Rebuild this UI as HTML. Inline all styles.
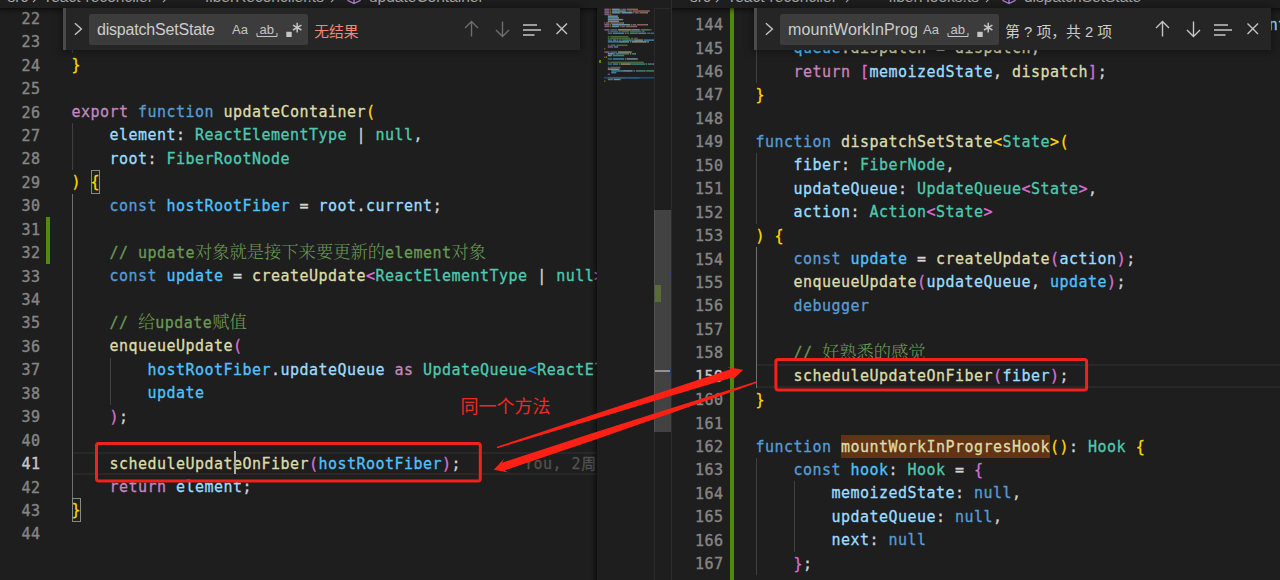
<!DOCTYPE html>
<html lang="zh-CN"><head><meta charset="utf-8"><title>VS Code</title>
<style>
html,body{margin:0;padding:0;background:#1e1e1e;}
body{width:1280px;height:580px;overflow:hidden;position:relative;font-family:"Liberation Sans","Noto Sans CJK SC",sans-serif;color:#d4d4d4;}
.pane{position:absolute;top:0;height:580px;overflow:hidden;background:#1e1e1e;}
#lp{left:0;width:597px;}
#rp{left:672px;width:608px;}
.ln{position:absolute;left:0;height:23.44px;line-height:23.44px;white-space:pre;font-family:"DejaVu Sans Mono","Liberation Mono","Noto Sans CJK SC",monospace;font-size:15px;letter-spacing:0.47px;-webkit-text-stroke:0.3px;}
.num{position:absolute;left:1px;top:1.5px;text-align:right;color:#858585;-webkit-text-stroke:0.4px;}
.na{color:#c6c6c6;}
.code{position:absolute;top:1px;}
.k1{color:#c586c0}.k2{color:#569cd6}.t{color:#4ec9b0}.v{color:#9cdcfe}.c{color:#4fc1ff}.f{color:#dcdcaa}.p{color:#d4d4d4}
.b1{color:#ffd700}.b2{color:#da70d6}.b3{color:#179fff}.cm{color:#6a9955}
.zh{line-height:0;font-weight:300;-webkit-text-stroke:0;font-family:"Noto Serif CJK SC","Noto Sans CJK SC",serif;font-size:17.28px;letter-spacing:0;}
.zhs{line-height:0;font-family:"Noto Sans CJK SC",sans-serif;letter-spacing:0;}
.bm{outline:1px solid #888;outline-offset:-1px;background:rgba(0,100,0,0.1);}
.fmb{position:absolute;height:23.44px;background:#623315;}
.blame{color:#525252;margin-left:63px;}
.g{position:absolute;width:1.2px;background:#404040;}
.ga{background:#707070;}
.curline{position:absolute;height:23.44px;box-sizing:border-box;border-top:2px solid #282828;border-bottom:2px solid #282828;}
.cursor{position:absolute;width:2px;background:#aeafad;}
.dd{position:absolute;background:#4f8a0a;}
.topsh{position:absolute;left:0;top:8px;width:100%;height:6px;box-shadow:#000 0 6px 6px -6px inset;}
#mm{position:absolute;left:597px;top:8px;width:57px;height:572px;background:#1e1e1e;overflow:hidden;}
.mmsh{position:absolute;left:591px;top:8px;width:6px;height:572px;box-shadow:#000 -6px 0 6px -6px inset;}
.mmg{position:absolute;left:2px;top:51.8px;width:2px;height:3.4px;background:#568a0e;}
#sb{position:absolute;left:654px;top:8px;width:17px;height:572px;background:#1e1e1e;border-left:1px solid #2a2a2a;border-top:1.5px solid #2a2a2a;box-sizing:border-box;}
.sl{position:absolute;left:-1px;top:201.3px;width:17px;height:221.7px;background:rgba(121,121,121,0.4);border-left:1px solid rgba(255,255,255,0.05);box-sizing:border-box;}
.sbg{position:absolute;left:0;top:276px;width:5.5px;height:16.7px;background:#587c0c;opacity:0.75;}
.sbc{position:absolute;left:0;top:361.4px;width:16px;height:1.8px;background:#a0a0a0;}
.sbb{position:absolute;left:15px;width:2px;height:5px;background:#2a3f7a;}
#dv{position:absolute;left:671px;top:0;width:2px;height:580px;background:#2c2c2c;}
.bc{position:absolute;top:0;height:8px;overflow:hidden;background:#1e1e1e;font-size:15.5px;color:#a9a9a9;white-space:pre;}
.bc span{position:absolute;top:-12.2px;line-height:18px;}
.bc .ch{font-size:17px;top:-13px;}
.bc .cube{position:absolute;top:-11.3px;}
.fw{position:absolute;top:8px;width:517px;height:41.5px;background:#252526;box-shadow:0 0 8px 2px rgba(0,0,0,0.36);overflow:hidden;}
.sash{position:absolute;left:0;top:0;width:3px;height:100%;background:#4b4b4b;}
.ic{position:absolute;}
.dim{opacity:0.45;}
.inp{position:absolute;left:26px;top:5.6px;width:219px;height:31px;background:#3c3c3c;border-radius:2.5px;}
.q{position:absolute;left:8px;top:0;line-height:31px;font-size:16px;color:#cccccc;overflow:hidden;white-space:pre;height:31px;letter-spacing:-0.2px;}
.opt{position:absolute;font-size:13px;line-height:16px;color:#c5c5c5;}
.msg{position:absolute;left:251.2px;top:1.9px;line-height:45px;font-size:14.8px;color:#cccccc;white-space:pre;}
#anno{position:absolute;left:0;top:0;}
.mms{position:absolute;left:0;top:0;}
.chv{position:absolute;top:0;overflow:visible;}
.bmb{position:absolute;width:9.7px;height:23.44px;box-sizing:border-box;border:1px solid #888;background:rgba(0,100,0,0.1);}

</style></head>
<body>
<div id="lp" class="pane">
<div class="curline" style="left:72px;top:451.61px;width:600px"></div>
<i class="dd" style="left:46px;top:216.8px;height:47.3px;width:4px"></i>
<i class="bmb" style="left:90.8px;top:170.33px"></i><i class="bmb" style="left:71.8px;top:498.49px"></i>
<i class="g" style="left:72.00px;top:6.25px;height:46.88px"></i><i class="g" style="left:72.00px;top:123.45px;height:46.88px"></i><i class="g ga" style="left:72.00px;top:193.77px;height:304.72px"></i><i class="g" style="left:110.00px;top:357.85px;height:46.88px"></i><div class="ln" style="top:6.25px"><span class="num" style="width:39.5px">22</span><span class="code" style="left:71.5px">    <span class="cm">// return fiberRootNode</span></span></div>
<div class="ln" style="top:29.69px"><span class="num" style="width:39.5px">23</span><span class="code" style="left:71.5px"><span class="p">    </span><span class="k1">return</span><span class="p"> </span><span class="c">root</span><span class="p">;</span></span></div>
<div class="ln" style="top:53.13px"><span class="num" style="width:39.5px">24</span><span class="code" style="left:71.5px"><span class="b1">}</span></span></div>
<div class="ln" style="top:76.57px"><span class="num" style="width:39.5px">25</span><span class="code" style="left:71.5px"></span></div>
<div class="ln" style="top:100.01px"><span class="num" style="width:39.5px">26</span><span class="code" style="left:71.5px"><span class="k1">export</span><span class="p"> </span><span class="k2">function</span><span class="p"> </span><span class="f">updateContainer</span><span class="b1">(</span></span></div>
<div class="ln" style="top:123.45px"><span class="num" style="width:39.5px">27</span><span class="code" style="left:71.5px"><span class="p">    </span><span class="v">element</span><span class="p">: </span><span class="t">ReactElementType</span><span class="p"> | </span><span class="t">null</span><span class="p">,</span></span></div>
<div class="ln" style="top:146.89px"><span class="num" style="width:39.5px">28</span><span class="code" style="left:71.5px"><span class="p">    </span><span class="v">root</span><span class="p">: </span><span class="t">FiberRootNode</span></span></div>
<div class="ln" style="top:170.33px"><span class="num" style="width:39.5px">29</span><span class="code" style="left:71.5px"><span class="b1">)</span><span class="p"> </span><span class="b1">{</span></span></div>
<div class="ln" style="top:193.77px"><span class="num" style="width:39.5px">30</span><span class="code" style="left:71.5px"><span class="p">    </span><span class="k2">const</span><span class="p"> </span><span class="c">hostRootFiber</span><span class="p"> = </span><span class="v">root</span><span class="p">.</span><span class="v">current</span><span class="p">;</span></span></div>
<div class="ln" style="top:217.21px"><span class="num" style="width:39.5px">31</span><span class="code" style="left:71.5px"></span></div>
<div class="ln" style="top:240.65px"><span class="num" style="width:39.5px">32</span><span class="code" style="left:71.5px">    <span class="cm">// update<span class="zh">对象就是接下来要更新的</span>element<span class="zh">对象</span></span></span></div>
<div class="ln" style="top:264.09px"><span class="num" style="width:39.5px">33</span><span class="code" style="left:71.5px"><span class="p">    </span><span class="k2">const</span><span class="p"> </span><span class="c">update</span><span class="p"> = </span><span class="f">createUpdate</span><span class="b2">&lt;</span><span class="t">ReactElementType</span><span class="p"> | </span><span class="t">null</span><span class="b2">&gt;</span><span class="b2">(</span><span class="v">element</span><span class="b2">)</span><span class="p">;</span></span></div>
<div class="ln" style="top:287.53px"><span class="num" style="width:39.5px">34</span><span class="code" style="left:71.5px"></span></div>
<div class="ln" style="top:310.97px"><span class="num" style="width:39.5px">35</span><span class="code" style="left:71.5px">    <span class="cm">// <span class="zh">给</span>update<span class="zh">赋值</span></span></span></div>
<div class="ln" style="top:334.41px"><span class="num" style="width:39.5px">36</span><span class="code" style="left:71.5px"><span class="p">    </span><span class="f">enqueueUpdate</span><span class="b2">(</span></span></div>
<div class="ln" style="top:357.85px"><span class="num" style="width:39.5px">37</span><span class="code" style="left:71.5px"><span class="p">        </span><span class="c">hostRootFiber</span><span class="p">.</span><span class="v">updateQueue</span><span class="p"> </span><span class="k1">as</span><span class="p"> </span><span class="t">UpdateQueue</span><span class="b3">&lt;</span><span class="t">ReactElementType</span><span class="p"> | </span><span class="t">null</span><span class="b3">&gt;</span><span class="p">,</span></span></div>
<div class="ln" style="top:381.29px"><span class="num" style="width:39.5px">38</span><span class="code" style="left:71.5px"><span class="p">        </span><span class="c">update</span></span></div>
<div class="ln" style="top:404.73px"><span class="num" style="width:39.5px">39</span><span class="code" style="left:71.5px"><span class="p">    </span><span class="b2">)</span><span class="p">;</span></span></div>
<div class="ln" style="top:428.17px"><span class="num" style="width:39.5px">40</span><span class="code" style="left:71.5px"></span></div>
<div class="ln" style="top:451.61px"><span class="num na" style="width:39.5px">41</span><span class="code" style="left:71.5px"><span class="p">    </span><span class="f">scheduleUpdateOnFiber</span><span class="b2">(</span><span class="c">hostRootFiber</span><span class="b2">)</span><span class="p">;</span><span class="blame">You, 2<span class="zhs">周前</span> • feat: update</span></span></div>
<div class="ln" style="top:475.05px"><span class="num" style="width:39.5px">42</span><span class="code" style="left:71.5px"><span class="p">    </span><span class="k1">return</span><span class="p"> </span><span class="v">element</span><span class="p">;</span></span></div>
<div class="ln" style="top:498.49px"><span class="num" style="width:39.5px">43</span><span class="code" style="left:71.5px"><span class="b1">}</span></span></div>
<div class="ln" style="top:521.93px"><span class="num" style="width:39.5px">44</span><span class="code" style="left:71.5px"></span></div>
<i class="cursor" style="left:233.8px;top:451.3px;height:23.2px"></i>
<i class="topsh"></i>
</div>
<div id="mm"><svg class="mms" width="57" height="90" viewBox="0 0 57 90"><g opacity="0.6"><rect x="7.40" y="0.60" width="5.12" height="1.5" fill="#c586c0"/><rect x="13.38" y="0.60" width="0.85" height="1.5" fill="#ffd700"/><rect x="15.09" y="0.60" width="7.69" height="1.5" fill="#9cdcfe"/><rect x="23.63" y="0.60" width="0.85" height="1.5" fill="#ffd700"/><rect x="25.33" y="0.60" width="3.42" height="1.5" fill="#c586c0"/><rect x="29.60" y="0.60" width="10.25" height="1.5" fill="#ce9178"/><rect x="39.85" y="0.60" width="0.85" height="1.5" fill="#d4d4d4"/><rect x="7.40" y="2.31" width="5.12" height="1.5" fill="#c586c0"/><rect x="13.38" y="2.31" width="0.85" height="1.5" fill="#ffd700"/><rect x="15.09" y="2.31" width="13.66" height="1.5" fill="#9cdcfe"/><rect x="29.60" y="2.31" width="0.85" height="1.5" fill="#ffd700"/><rect x="31.31" y="2.31" width="3.42" height="1.5" fill="#c586c0"/><rect x="35.58" y="2.31" width="16.23" height="1.5" fill="#ce9178"/><rect x="51.81" y="2.31" width="0.85" height="1.5" fill="#d4d4d4"/><rect x="7.40" y="4.02" width="5.12" height="1.5" fill="#c586c0"/><rect x="13.38" y="4.02" width="0.85" height="1.5" fill="#ffd700"/><rect x="15.09" y="4.02" width="7.69" height="1.5" fill="#9cdcfe"/><rect x="22.77" y="4.02" width="0.85" height="1.5" fill="#d4d4d4"/><rect x="24.48" y="4.02" width="11.10" height="1.5" fill="#9cdcfe"/><rect x="36.44" y="4.02" width="0.85" height="1.5" fill="#ffd700"/><rect x="38.14" y="4.02" width="3.42" height="1.5" fill="#c586c0"/><rect x="42.41" y="4.02" width="7.69" height="1.5" fill="#ce9178"/><rect x="50.10" y="4.02" width="0.85" height="1.5" fill="#d4d4d4"/><rect x="7.40" y="5.73" width="5.12" height="1.5" fill="#c586c0"/><rect x="13.38" y="5.73" width="0.85" height="1.5" fill="#ffd700"/><rect x="10.82" y="7.44" width="9.39" height="1.5" fill="#9cdcfe"/><rect x="20.21" y="7.44" width="0.85" height="1.5" fill="#d4d4d4"/><rect x="10.82" y="9.15" width="10.25" height="1.5" fill="#9cdcfe"/><rect x="21.06" y="9.15" width="0.85" height="1.5" fill="#d4d4d4"/><rect x="10.82" y="10.86" width="14.52" height="1.5" fill="#9cdcfe"/><rect x="25.33" y="10.86" width="0.85" height="1.5" fill="#d4d4d4"/><rect x="10.82" y="12.57" width="11.10" height="1.5" fill="#9cdcfe"/><rect x="7.40" y="14.28" width="0.85" height="1.5" fill="#ffd700"/><rect x="9.11" y="14.28" width="3.42" height="1.5" fill="#c586c0"/><rect x="13.38" y="14.28" width="12.81" height="1.5" fill="#ce9178"/><rect x="26.19" y="14.28" width="0.85" height="1.5" fill="#d4d4d4"/><rect x="7.40" y="15.99" width="5.12" height="1.5" fill="#c586c0"/><rect x="13.38" y="15.99" width="0.85" height="1.5" fill="#ffd700"/><rect x="15.09" y="15.99" width="17.93" height="1.5" fill="#9cdcfe"/><rect x="33.87" y="15.99" width="0.85" height="1.5" fill="#ffd700"/><rect x="35.58" y="15.99" width="3.42" height="1.5" fill="#c586c0"/><rect x="39.85" y="15.99" width="10.25" height="1.5" fill="#ce9178"/><rect x="50.10" y="15.99" width="0.85" height="1.5" fill="#d4d4d4"/><rect x="7.40" y="17.70" width="5.12" height="1.5" fill="#c586c0"/><rect x="13.38" y="17.70" width="0.85" height="1.5" fill="#ffd700"/><rect x="15.09" y="17.70" width="6.83" height="1.5" fill="#9cdcfe"/><rect x="22.77" y="17.70" width="0.85" height="1.5" fill="#ffd700"/><rect x="24.48" y="17.70" width="3.42" height="1.5" fill="#c586c0"/><rect x="28.75" y="17.70" width="10.25" height="1.5" fill="#ce9178"/><rect x="39.00" y="17.70" width="0.85" height="1.5" fill="#d4d4d4"/><rect x="7.40" y="21.12" width="5.12" height="1.5" fill="#c586c0"/><rect x="13.38" y="21.12" width="6.83" height="1.5" fill="#569cd6"/><rect x="21.06" y="21.12" width="12.81" height="1.5" fill="#dcdcaa"/><rect x="33.87" y="21.12" width="0.85" height="1.5" fill="#ffd700"/><rect x="34.73" y="21.12" width="7.69" height="1.5" fill="#9cdcfe"/><rect x="42.41" y="21.12" width="0.85" height="1.5" fill="#d4d4d4"/><rect x="44.12" y="21.12" width="7.69" height="1.5" fill="#4ec9b0"/><rect x="51.81" y="21.12" width="0.85" height="1.5" fill="#ffd700"/><rect x="53.52" y="21.12" width="0.85" height="1.5" fill="#ffd700"/><rect x="10.82" y="22.83" width="1.71" height="1.5" fill="#6a9955"/><rect x="13.38" y="22.83" width="7.69" height="1.5" fill="#6a9955"/><rect x="21.92" y="22.83" width="1.71" height="1.5" fill="#6a9955"/><rect x="24.48" y="22.83" width="7.69" height="1.5" fill="#6a9955"/><rect x="33.02" y="22.83" width="11.10" height="1.5" fill="#6a9955"/><rect x="44.98" y="22.83" width="2.56" height="1.5" fill="#6a9955"/><rect x="10.82" y="24.54" width="4.27" height="1.5" fill="#569cd6"/><rect x="15.94" y="24.54" width="11.10" height="1.5" fill="#4fc1ff"/><rect x="27.90" y="24.54" width="0.85" height="1.5" fill="#d4d4d4"/><rect x="29.60" y="24.54" width="2.56" height="1.5" fill="#569cd6"/><rect x="33.02" y="24.54" width="7.69" height="1.5" fill="#4ec9b0"/><rect x="40.71" y="24.54" width="0.85" height="1.5" fill="#da70d6"/><rect x="41.56" y="24.54" width="6.83" height="1.5" fill="#4fc1ff"/><rect x="48.39" y="24.54" width="0.85" height="1.5" fill="#d4d4d4"/><rect x="50.10" y="24.54" width="1.71" height="1.5" fill="#179fff"/><rect x="51.81" y="24.54" width="0.85" height="1.5" fill="#d4d4d4"/><rect x="53.52" y="24.54" width="3.42" height="1.5" fill="#569cd6"/><rect x="56.93" y="24.54" width="0.07" height="1.5" fill="#da70d6"/><rect x="10.82" y="27.96" width="1.71" height="1.5" fill="#6a9955"/><rect x="13.38" y="27.96" width="17.93" height="1.5" fill="#6a9955"/><rect x="10.82" y="29.67" width="1.71" height="1.5" fill="#6a9955"/><rect x="13.38" y="29.67" width="19.64" height="1.5" fill="#6a9955"/><rect x="33.87" y="29.67" width="2.56" height="1.5" fill="#6a9955"/><rect x="37.29" y="29.67" width="3.42" height="1.5" fill="#6a9955"/><rect x="10.82" y="31.38" width="4.27" height="1.5" fill="#569cd6"/><rect x="15.94" y="31.38" width="3.42" height="1.5" fill="#4fc1ff"/><rect x="20.21" y="31.38" width="0.85" height="1.5" fill="#d4d4d4"/><rect x="21.92" y="31.38" width="2.56" height="1.5" fill="#569cd6"/><rect x="25.33" y="31.38" width="11.10" height="1.5" fill="#4ec9b0"/><rect x="36.44" y="31.38" width="0.85" height="1.5" fill="#da70d6"/><rect x="37.29" y="31.38" width="7.69" height="1.5" fill="#9cdcfe"/><rect x="44.98" y="31.38" width="0.85" height="1.5" fill="#d4d4d4"/><rect x="46.68" y="31.38" width="10.32" height="1.5" fill="#4fc1ff"/><rect x="10.82" y="33.09" width="11.10" height="1.5" fill="#4fc1ff"/><rect x="21.92" y="33.09" width="0.85" height="1.5" fill="#d4d4d4"/><rect x="22.77" y="33.09" width="9.39" height="1.5" fill="#9cdcfe"/><rect x="33.02" y="33.09" width="0.85" height="1.5" fill="#d4d4d4"/><rect x="34.73" y="33.09" width="14.52" height="1.5" fill="#dcdcaa"/><rect x="49.25" y="33.09" width="1.71" height="1.5" fill="#da70d6"/><rect x="50.95" y="33.09" width="0.85" height="1.5" fill="#d4d4d4"/><rect x="10.82" y="36.51" width="1.71" height="1.5" fill="#6a9955"/><rect x="13.38" y="36.51" width="5.12" height="1.5" fill="#6a9955"/><rect x="19.36" y="36.51" width="11.10" height="1.5" fill="#6a9955"/><rect x="10.82" y="38.22" width="5.12" height="1.5" fill="#c586c0"/><rect x="16.79" y="38.22" width="3.42" height="1.5" fill="#4fc1ff"/><rect x="20.21" y="38.22" width="0.85" height="1.5" fill="#d4d4d4"/><rect x="7.40" y="39.93" width="0.85" height="1.5" fill="#ffd700"/><rect x="7.40" y="43.35" width="5.12" height="1.5" fill="#c586c0"/><rect x="13.38" y="43.35" width="6.83" height="1.5" fill="#569cd6"/><rect x="21.06" y="43.35" width="12.81" height="1.5" fill="#dcdcaa"/><rect x="33.87" y="43.35" width="0.85" height="1.5" fill="#ffd700"/><rect x="10.82" y="45.06" width="5.98" height="1.5" fill="#9cdcfe"/><rect x="16.79" y="45.06" width="0.85" height="1.5" fill="#d4d4d4"/><rect x="18.50" y="45.06" width="13.66" height="1.5" fill="#4ec9b0"/><rect x="33.02" y="45.06" width="0.85" height="1.5" fill="#d4d4d4"/><rect x="34.73" y="45.06" width="3.42" height="1.5" fill="#4ec9b0"/><rect x="38.14" y="45.06" width="0.85" height="1.5" fill="#d4d4d4"/><rect x="10.82" y="46.77" width="3.42" height="1.5" fill="#9cdcfe"/><rect x="14.23" y="46.77" width="0.85" height="1.5" fill="#d4d4d4"/><rect x="15.94" y="46.77" width="11.10" height="1.5" fill="#4ec9b0"/><rect x="7.40" y="48.48" width="0.85" height="1.5" fill="#ffd700"/><rect x="9.11" y="48.48" width="0.85" height="1.5" fill="#ffd700"/><rect x="10.82" y="50.19" width="4.27" height="1.5" fill="#569cd6"/><rect x="15.94" y="50.19" width="11.10" height="1.5" fill="#4fc1ff"/><rect x="27.90" y="50.19" width="0.85" height="1.5" fill="#d4d4d4"/><rect x="29.60" y="50.19" width="3.42" height="1.5" fill="#9cdcfe"/><rect x="33.02" y="50.19" width="0.85" height="1.5" fill="#d4d4d4"/><rect x="33.87" y="50.19" width="5.98" height="1.5" fill="#9cdcfe"/><rect x="39.85" y="50.19" width="0.85" height="1.5" fill="#d4d4d4"/><rect x="10.82" y="53.61" width="1.71" height="1.5" fill="#6a9955"/><rect x="13.38" y="53.61" width="33.31" height="1.5" fill="#6a9955"/><rect x="10.82" y="55.32" width="4.27" height="1.5" fill="#569cd6"/><rect x="15.94" y="55.32" width="5.12" height="1.5" fill="#4fc1ff"/><rect x="21.92" y="55.32" width="0.85" height="1.5" fill="#d4d4d4"/><rect x="23.63" y="55.32" width="10.25" height="1.5" fill="#dcdcaa"/><rect x="33.87" y="55.32" width="0.85" height="1.5" fill="#da70d6"/><rect x="34.73" y="55.32" width="13.66" height="1.5" fill="#4ec9b0"/><rect x="49.25" y="55.32" width="0.85" height="1.5" fill="#d4d4d4"/><rect x="50.95" y="55.32" width="3.42" height="1.5" fill="#4ec9b0"/><rect x="54.37" y="55.32" width="0.85" height="1.5" fill="#da70d6"/><rect x="55.22" y="55.32" width="0.85" height="1.5" fill="#da70d6"/><rect x="56.08" y="55.32" width="0.92" height="1.5" fill="#9cdcfe"/><rect x="10.82" y="58.74" width="1.71" height="1.5" fill="#6a9955"/><rect x="13.38" y="58.74" width="10.25" height="1.5" fill="#6a9955"/><rect x="10.82" y="60.45" width="11.10" height="1.5" fill="#dcdcaa"/><rect x="21.92" y="60.45" width="0.85" height="1.5" fill="#da70d6"/><rect x="14.23" y="62.16" width="11.10" height="1.5" fill="#4fc1ff"/><rect x="25.33" y="62.16" width="0.85" height="1.5" fill="#d4d4d4"/><rect x="26.19" y="62.16" width="9.39" height="1.5" fill="#9cdcfe"/><rect x="36.44" y="62.16" width="1.71" height="1.5" fill="#c586c0"/><rect x="39.00" y="62.16" width="9.39" height="1.5" fill="#4ec9b0"/><rect x="48.39" y="62.16" width="0.85" height="1.5" fill="#179fff"/><rect x="49.25" y="62.16" width="7.75" height="1.5" fill="#4ec9b0"/><rect x="14.23" y="63.87" width="5.12" height="1.5" fill="#4fc1ff"/><rect x="10.82" y="65.58" width="0.85" height="1.5" fill="#da70d6"/><rect x="11.67" y="65.58" width="0.85" height="1.5" fill="#d4d4d4"/><rect x="10.82" y="69.00" width="17.93" height="1.5" fill="#dcdcaa"/><rect x="28.75" y="69.00" width="0.85" height="1.5" fill="#da70d6"/><rect x="29.60" y="69.00" width="11.10" height="1.5" fill="#4fc1ff"/><rect x="40.71" y="69.00" width="0.85" height="1.5" fill="#da70d6"/><rect x="41.56" y="69.00" width="0.85" height="1.5" fill="#d4d4d4"/><rect x="10.82" y="70.71" width="5.12" height="1.5" fill="#c586c0"/><rect x="16.79" y="70.71" width="5.98" height="1.5" fill="#9cdcfe"/><rect x="22.77" y="70.71" width="0.85" height="1.5" fill="#d4d4d4"/><rect x="7.40" y="72.42" width="0.85" height="1.5" fill="#ffd700"/></g><rect x="7" y="68.90" width="50" height="1.71" fill="#264f78" opacity="0.85"/></svg><i class="mmg"></i></div>
<i class="mmsh"></i>
<div id="sb"><i class="sbg"></i><i class="sbc"></i><i class="sl"></i><i class="sbb" style="top:263px;height:4px"></i><i class="sbb" style="top:357.5px;height:11px"></i></div>
<div id="dv"></div>
<div id="rp" class="pane">
<div class="curline" style="left:84px;top:364.23px;width:600px"></div>
<i class="dd" style="left:58px;top:8px;height:572px;width:4px"></i>
<i class="fmb" style="left:168.6px;top:434.55px;width:209px"></i>
<i class="g" style="left:84.00px;top:12.63px;height:70.32px"></i><i class="g" style="left:84.00px;top:153.27px;height:70.32px"></i><i class="g ga" style="left:84.00px;top:247.03px;height:140.64px"></i><i class="g" style="left:84.00px;top:457.99px;height:117.20px"></i><i class="g" style="left:122.00px;top:481.43px;height:70.32px"></i><div class="ln" style="top:12.63px"><span class="num" style="width:50.5px">144</span><span class="code" style="left:83.5px"><span class="p">    </span><span class="k2">const</span><span class="p"> </span><span class="f">dispatch</span><span class="p"> = </span><span class="f">dispatchSetState</span><span class="p">.</span><span class="f">bind</span><span class="b2">(</span><span class="k2">null</span><span class="p">, </span><span class="v">currentlyRenderingFiber</span><span class="p">, </span><span class="c">queue</span><span class="b2">)</span><span class="p">;</span></span></div>
<div class="ln" style="top:36.07px"><span class="num" style="width:50.5px">145</span><span class="code" style="left:83.5px"><span class="p">    </span><span class="c">queue</span><span class="p">.</span><span class="f">dispatch</span><span class="p"> = </span><span class="f">dispatch</span><span class="p">;</span></span></div>
<div class="ln" style="top:59.51px"><span class="num" style="width:50.5px">146</span><span class="code" style="left:83.5px"><span class="p">    </span><span class="k1">return</span><span class="p"> </span><span class="b2">[</span><span class="v">memoizedState</span><span class="p">, </span><span class="f">dispatch</span><span class="b2">]</span><span class="p">;</span></span></div>
<div class="ln" style="top:82.95px"><span class="num" style="width:50.5px">147</span><span class="code" style="left:83.5px"><span class="b1">}</span></span></div>
<div class="ln" style="top:106.39px"><span class="num" style="width:50.5px">148</span><span class="code" style="left:83.5px"></span></div>
<div class="ln" style="top:129.83px"><span class="num" style="width:50.5px">149</span><span class="code" style="left:83.5px"><span class="k2">function</span><span class="p"> </span><span class="f">dispatchSetState</span><span class="b1">&lt;</span><span class="t">State</span><span class="b1">&gt;</span><span class="b1">(</span></span></div>
<div class="ln" style="top:153.27px"><span class="num" style="width:50.5px">150</span><span class="code" style="left:83.5px"><span class="p">    </span><span class="v">fiber</span><span class="p">: </span><span class="t">FiberNode</span><span class="p">,</span></span></div>
<div class="ln" style="top:176.71px"><span class="num" style="width:50.5px">151</span><span class="code" style="left:83.5px"><span class="p">    </span><span class="v">updateQueue</span><span class="p">: </span><span class="t">UpdateQueue</span><span class="b2">&lt;</span><span class="t">State</span><span class="b2">&gt;</span><span class="p">,</span></span></div>
<div class="ln" style="top:200.15px"><span class="num" style="width:50.5px">152</span><span class="code" style="left:83.5px"><span class="p">    </span><span class="v">action</span><span class="p">: </span><span class="t">Action</span><span class="b2">&lt;</span><span class="t">State</span><span class="b2">&gt;</span></span></div>
<div class="ln" style="top:223.59px"><span class="num" style="width:50.5px">153</span><span class="code" style="left:83.5px"><span class="b1">)</span><span class="p"> </span><span class="b1">{</span></span></div>
<div class="ln" style="top:247.03px"><span class="num" style="width:50.5px">154</span><span class="code" style="left:83.5px"><span class="p">    </span><span class="k2">const</span><span class="p"> </span><span class="c">update</span><span class="p"> = </span><span class="f">createUpdate</span><span class="b2">(</span><span class="v">action</span><span class="b2">)</span><span class="p">;</span></span></div>
<div class="ln" style="top:270.47px"><span class="num" style="width:50.5px">155</span><span class="code" style="left:83.5px"><span class="p">    </span><span class="f">enqueueUpdate</span><span class="b2">(</span><span class="v">updateQueue</span><span class="p">, </span><span class="c">update</span><span class="b2">)</span><span class="p">;</span></span></div>
<div class="ln" style="top:293.91px"><span class="num" style="width:50.5px">156</span><span class="code" style="left:83.5px"><span class="p">    </span><span class="k2">debugger</span></span></div>
<div class="ln" style="top:317.35px"><span class="num" style="width:50.5px">157</span><span class="code" style="left:83.5px"></span></div>
<div class="ln" style="top:340.79px"><span class="num" style="width:50.5px">158</span><span class="code" style="left:83.5px">    <span class="cm">// <span class="zh">好熟悉的感觉</span></span></span></div>
<div class="ln" style="top:364.23px"><span class="num na" style="width:50.5px">159</span><span class="code" style="left:83.5px"><span class="p">    </span><span class="f">scheduleUpdateOnFiber</span><span class="b2">(</span><span class="v">fiber</span><span class="b2">)</span><span class="p">;</span></span></div>
<div class="ln" style="top:387.67px"><span class="num" style="width:50.5px">160</span><span class="code" style="left:83.5px"><span class="b1">}</span></span></div>
<div class="ln" style="top:411.11px"><span class="num" style="width:50.5px">161</span><span class="code" style="left:83.5px"></span></div>
<div class="ln" style="top:434.55px"><span class="num" style="width:50.5px">162</span><span class="code" style="left:83.5px"><span class="k2">function</span><span class="p"> </span><span class="f fm">mountWorkInProgresHook</span><span class="b1">()</span><span class="p">: </span><span class="t">Hook</span><span class="p"> </span><span class="b1">{</span></span></div>
<div class="ln" style="top:457.99px"><span class="num" style="width:50.5px">163</span><span class="code" style="left:83.5px"><span class="p">    </span><span class="k2">const</span><span class="p"> </span><span class="c">hook</span><span class="p">: </span><span class="t">Hook</span><span class="p"> = </span><span class="b2">{</span></span></div>
<div class="ln" style="top:481.43px"><span class="num" style="width:50.5px">164</span><span class="code" style="left:83.5px"><span class="p">        </span><span class="v">memoizedState</span><span class="p">: </span><span class="k2">null</span><span class="p">,</span></span></div>
<div class="ln" style="top:504.87px"><span class="num" style="width:50.5px">165</span><span class="code" style="left:83.5px"><span class="p">        </span><span class="v">updateQueue</span><span class="p">: </span><span class="k2">null</span><span class="p">,</span></span></div>
<div class="ln" style="top:528.31px"><span class="num" style="width:50.5px">166</span><span class="code" style="left:83.5px"><span class="p">        </span><span class="v">next</span><span class="p">: </span><span class="k2">null</span></span></div>
<div class="ln" style="top:551.75px"><span class="num" style="width:50.5px">167</span><span class="code" style="left:83.5px"><span class="p">    </span><span class="b2">}</span><span class="p">;</span></span></div>
<i class="topsh"></i>
</div>

<div class="bc" style="left:0;width:671px">
<span style="left:7.5px">src</span><svg class="chv" style="left:31.0px" width="8" height="8" viewBox="0 0 8 8"><path d="M2 -6 L6 -2 L2 2.2" fill="none" stroke="#a9a9a9" stroke-width="1.2"/></svg><span style="left:46px">react-reconciler</span><svg class="chv" style="left:161.0px" width="8" height="8" viewBox="0 0 8 8"><path d="M2 -6 L6 -2 L2 2.2" fill="none" stroke="#a9a9a9" stroke-width="1.2"/></svg><span style="left:205px">fiberReconciler.ts</span><svg class="chv" style="left:329.0px" width="8" height="8" viewBox="0 0 8 8"><path d="M2 -6 L6 -2 L2 2.2" fill="none" stroke="#a9a9a9" stroke-width="1.2"/></svg>
<svg class="cube" style="left:346px" width="16" height="16" viewBox="0 0 16 16"><path d="M8 1.5 L14 4.5 V11.5 L8 14.5 L2 11.5 V4.5 Z M2 4.5 L8 7.5 L14 4.5 M8 7.5 V14.5" fill="none" stroke="#b180d7" stroke-width="1.3"/></svg>
<span style="left:369px">updateContainer</span>
</div>
<div class="bc" style="left:672px;width:608px">
<span style="left:18px">src</span><svg class="chv" style="left:42.0px" width="8" height="8" viewBox="0 0 8 8"><path d="M2 -6 L6 -2 L2 2.2" fill="none" stroke="#a9a9a9" stroke-width="1.2"/></svg><span style="left:58px">react-reconciler</span><svg class="chv" style="left:172.0px" width="8" height="8" viewBox="0 0 8 8"><path d="M2 -6 L6 -2 L2 2.2" fill="none" stroke="#a9a9a9" stroke-width="1.2"/></svg><span style="left:216.5px">fiberHooks.ts</span><svg class="chv" style="left:312.0px" width="8" height="8" viewBox="0 0 8 8"><path d="M2 -6 L6 -2 L2 2.2" fill="none" stroke="#a9a9a9" stroke-width="1.2"/></svg>
<svg class="cube" style="left:329px" width="16" height="16" viewBox="0 0 16 16"><path d="M8 1.5 L14 4.5 V11.5 L8 14.5 L2 11.5 V4.5 Z M2 4.5 L8 7.5 L14 4.5 M8 7.5 V14.5" fill="none" stroke="#b180d7" stroke-width="1.3"/></svg>
<span style="left:352px">dispatchSetState</span>
</div>

<div class="fw" style="left:63px">
<i class="sash"></i>
<svg class="ic" style="left:8px;top:12px" width="16" height="18" viewBox="0 0 16 18"><path d="M3.9 3.2 L10.4 9 L3.9 14.8" fill="none" stroke="#c5c5c5" stroke-width="1.4"/></svg>
<div class="inp"><span class="q">dispatchSetState</span></div>
<span class="opt" style="left:169px;top:14.2px">Aa</span>
<span class="opt" style="left:196.5px;top:13.5px">ab</span>
<svg class="ic" style="left:193px;top:24px" width="22" height="6" viewBox="0 0 22 6"><path d="M1 1 V4.5 H21 V1" fill="none" stroke="#c5c5c5" stroke-width="1"/></svg>
<svg class="ic" style="left:222px;top:13px" width="18" height="18" viewBox="0 0 18 18"><rect x="1.3" y="10.8" width="5.4" height="5.2" fill="#c5c5c5"/><path d="M12.2 1.8 V11.4 M8 4.2 L16.4 9 M16.4 4.2 L8 9" stroke="#c5c5c5" stroke-width="1.5" fill="none"/></svg>
<span class="msg" style="color:#f48771">无结果</span>
<svg class="ic dim" style="left:398px;top:10px" width="22" height="22" viewBox="0 0 22 22"><path d="M10.5 3.5 V18.5 M4 10 L10.5 3.5 L17 10" fill="none" stroke="#c5c5c5" stroke-width="1.4"/></svg>
<svg class="ic dim" style="left:428.5px;top:10px" width="22" height="22" viewBox="0 0 22 22"><path d="M10.5 3.5 V18.5 M4 12 L10.5 18.5 L17 12" fill="none" stroke="#c5c5c5" stroke-width="1.4"/></svg>
<svg class="ic" style="left:458px;top:10px" width="22" height="22" viewBox="0 0 22 22"><path d="M2 7 H16 M2 12 H20 M2 17 H13.5" fill="none" stroke="#c5c5c5" stroke-width="1.4"/></svg>
<svg class="ic" style="left:490px;top:10px" width="22" height="22" viewBox="0 0 22 22"><path d="M3.5 5.5 L14 16 M14 5.5 L3.5 16" fill="none" stroke="#c5c5c5" stroke-width="1.4"/></svg>
</div>

<div class="fw" style="left:754px">
<i class="sash"></i>
<svg class="ic" style="left:8px;top:12px" width="16" height="18" viewBox="0 0 16 18"><path d="M3.9 3.2 L10.4 9 L3.9 14.8" fill="none" stroke="#c5c5c5" stroke-width="1.4"/></svg>
<div class="inp"><span class="q" style="width:128.5px;letter-spacing:0.1px">mountWorkInProgresHook</span></div>
<span class="opt" style="left:169px;top:14.2px">Aa</span>
<span class="opt" style="left:196.5px;top:13.5px">ab</span>
<svg class="ic" style="left:193px;top:24px" width="22" height="6" viewBox="0 0 22 6"><path d="M1 1 V4.5 H21 V1" fill="none" stroke="#c5c5c5" stroke-width="1"/></svg>
<svg class="ic" style="left:222px;top:13px" width="18" height="18" viewBox="0 0 18 18"><rect x="1.3" y="10.8" width="5.4" height="5.2" fill="#c5c5c5"/><path d="M12.2 1.8 V11.4 M8 4.2 L16.4 9 M16.4 4.2 L8 9" stroke="#c5c5c5" stroke-width="1.5" fill="none"/></svg>
<span class="msg">第 ? 项，共 2 项</span>
<svg class="ic" style="left:398px;top:10px" width="22" height="22" viewBox="0 0 22 22"><path d="M10.5 3.5 V18.5 M4 10 L10.5 3.5 L17 10" fill="none" stroke="#c5c5c5" stroke-width="1.4"/></svg>
<svg class="ic" style="left:428.5px;top:10px" width="22" height="22" viewBox="0 0 22 22"><path d="M10.5 3.5 V18.5 M4 12 L10.5 18.5 L17 12" fill="none" stroke="#c5c5c5" stroke-width="1.4"/></svg>
<svg class="ic" style="left:458px;top:10px" width="22" height="22" viewBox="0 0 22 22"><path d="M2 7 H16 M2 12 H20 M2 17 H13.5" fill="none" stroke="#c5c5c5" stroke-width="1.4"/></svg>
<svg class="ic" style="left:490px;top:10px" width="22" height="22" viewBox="0 0 22 22"><path d="M3.5 5.5 L14 16 M14 5.5 L3.5 16" fill="none" stroke="#c5c5c5" stroke-width="1.4"/></svg>
</div>

<svg id="anno" width="1280" height="580" viewBox="0 0 1280 580">
<rect x="96.5" y="443.5" width="383.8" height="37.4" rx="2.2" ry="2.2" fill="none" stroke="#f0231c" stroke-width="3"/>
<rect x="775.9" y="359.6" width="310.7" height="30.4" rx="2.2" ry="2.2" fill="none" stroke="#f0231c" stroke-width="3"/>
<polygon fill="#fe2015" points="496.8,446.8 541.4,431.9 588.8,416.0 668.6,389.8 713.2,375.1 731.5,369.1 727.2,367.1 743.2,369.7 731.6,381.1 733.9,376.9 715.6,382.5 670.6,396.1 590.2,420.5 542.3,434.8 497.2,448.2"/>
<polygon fill="#fe2015" points="756.4,383.0 715.9,397.4 671.6,413.0 591.3,440.9 541.1,457.9 504.6,470.4 508.9,472.5 493.8,469.7 504.2,458.4 502.0,462.7 538.7,450.8 589.1,434.3 670.1,408.5 714.9,394.4 756.0,381.6"/>
<text x="460.5" y="412.5" font-family="'Liberation Sans','Noto Sans CJK SC',sans-serif" font-size="18" fill="#ee2a1f">同一个方法</text>
</svg>
</body></html>
